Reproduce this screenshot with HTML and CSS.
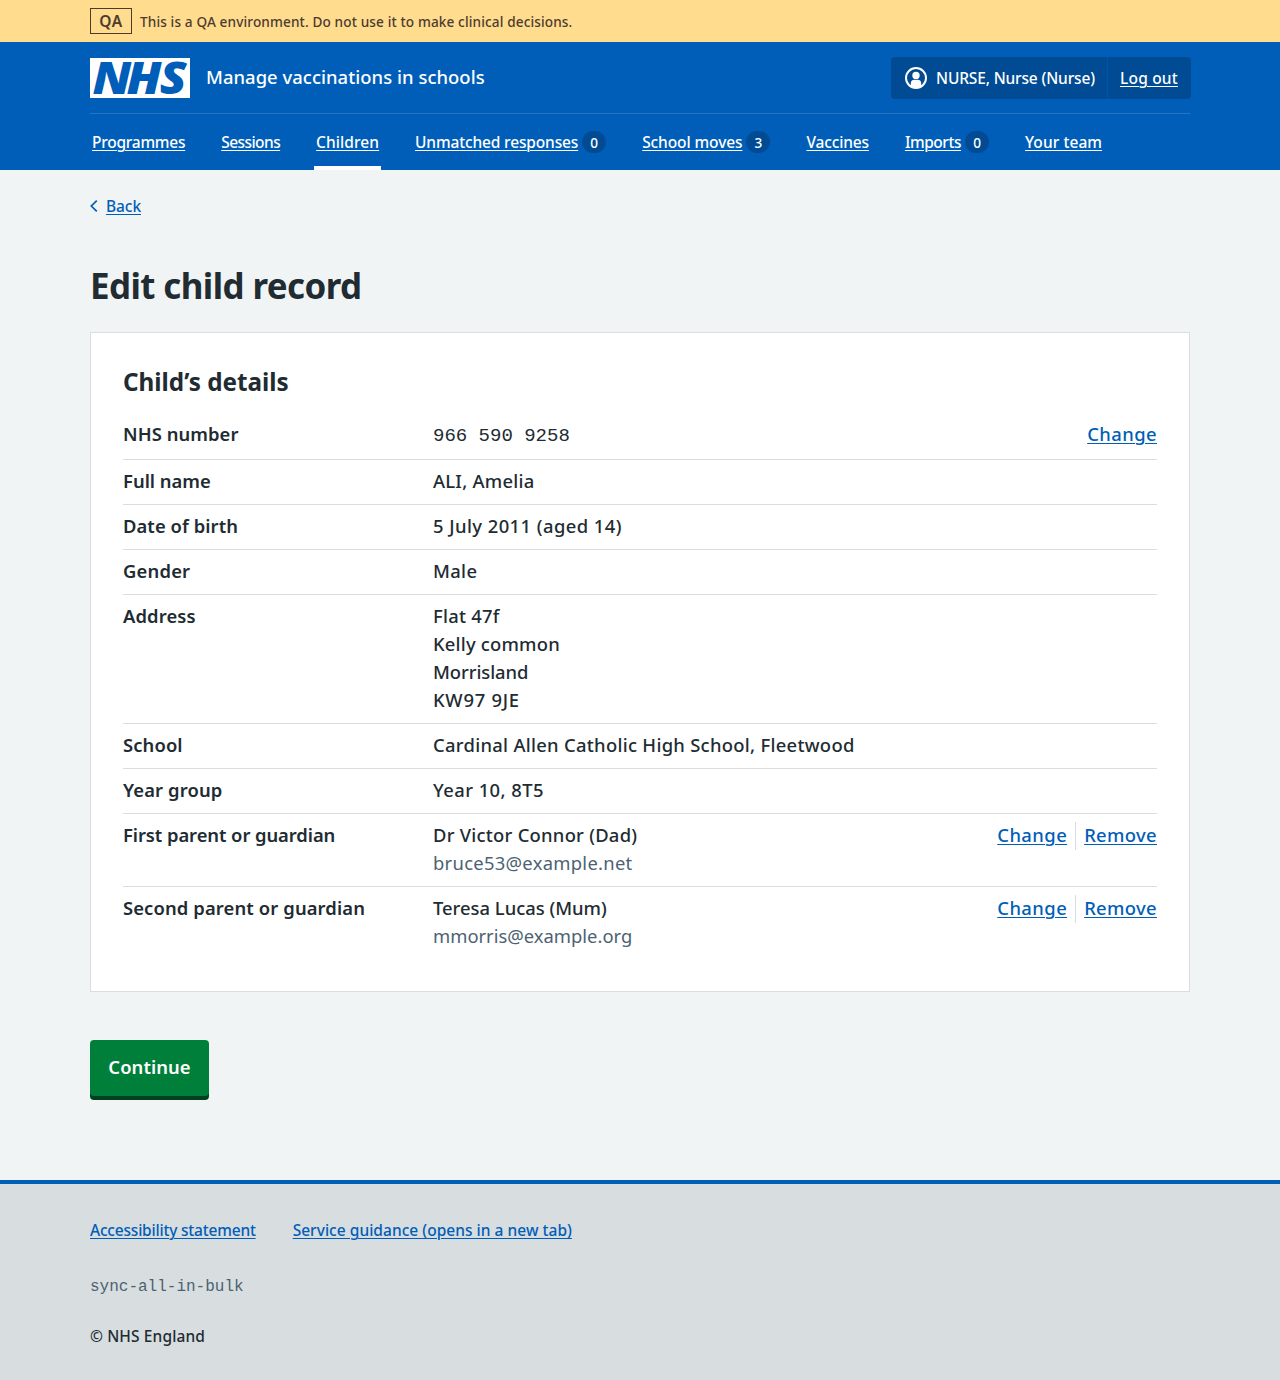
FILE: index.html
```html
<!DOCTYPE html>
<html lang="en">
<head>
<meta charset="utf-8">
<title>Edit child record - Manage vaccinations in schools</title>
<link rel="stylesheet" href="styles.css">
</head>
<body>
<div class="banner">
  <div class="container banner-row">
    <strong class="banner-tag">QA</strong>
    <span class="banner-text">This is a QA environment. Do not use it to make clinical decisions.</span>
  </div>
</div>
<header class="header">
  <div class="container">
    <div class="header-row">
      <div class="brand">
        <svg class="logo" viewBox="0 0 100 40" width="100" height="40" role="img" aria-label="NHS">
          <rect width="100" height="40" fill="#fff"/>
          <text class="logo-text" x="2.2 33.6 64" y="36" transform="scale(1.09 1)">NHS</text>
        </svg>
        <span class="service-name">Manage vaccinations in schools</span>
      </div>
      <div class="account">
        <span class="account-user">
          <svg width="22" height="22" viewBox="0 0 22 22" aria-hidden="true">
            <circle cx="11" cy="11" r="10" fill="none" stroke="#fff" stroke-width="2"/>
            <circle cx="11" cy="8.4" r="3.7" fill="#fff"/>
            <path d="M5.8 19V16.4a3.6 3.6 0 0 1 3.6-3.6h3.2a3.6 3.6 0 0 1 3.6 3.6V19a10 10 0 0 1-10.4 0Z" fill="#fff"/>
          </svg>
          <span class="track-n15">NURSE, Nurse (Nurse)</span>
        </span>
        <a class="account-link track-20" href="#">Log out</a>
      </div>
    </div>
    <nav class="nav">
      <span class="nav-item"><a class="track-n25" href="#">Programmes</a></span>
      <span class="nav-item"><a class="track-n56" href="#">Sessions</a></span>
      <span class="nav-item nav-item-current"><a class="track-07" href="#">Children</a></span>
      <span class="nav-item"><a class="track-n15" href="#">Unmatched responses</a><span class="count">0</span></span>
      <span class="nav-item"><a class="track-n10" href="#">School moves</a><span class="count">3</span></span>
      <span class="nav-item"><a class="track-n15" href="#">Vaccines</a></span>
      <span class="nav-item"><a class="track-n45" href="#">Imports</a><span class="count">0</span></span>
      <span class="nav-item"><a class="track-07" href="#">Your team</a></span>
    </nav>
  </div>
</header>
<main class="container main">
  <div class="back">
    <svg width="8" height="12" viewBox="0 0 8 12" aria-hidden="true"><path d="M6.8 .7 1.3 6l5.5 5.3" fill="none" stroke="#005eb8" stroke-width="1.7"/></svg>
    <a class="track-n07" href="#">Back</a>
  </div>
  <h1>Edit child record</h1>
  <section class="card">
    <h2>Child’s details</h2>
    <dl class="summary">
      <div class="row"><dt class="track-07">NHS number</dt><dd><span class="mono">966 590 9258</span></dd><dd class="actions"><a class="track-44" href="#">Change</a></dd></div>
      <div class="row"><dt>Full name</dt><dd class="track-25">ALI, Amelia</dd></div>
      <div class="row"><dt class="track-07">Date of birth</dt><dd class="track-44">5 July 2011 (aged 14)</dd></div>
      <div class="row"><dt class="track-20">Gender</dt><dd class="track-36">Male</dd></div>
      <div class="row"><dt class="track-12">Address</dt><dd><span class="track-25">Flat 47f</span><br><span class="track-20">Kelly common</span><br><span class="track-n07">Morrisland</span><br><span class="track-75">KW97 9JE</span></dd></div>
      <div class="row"><dt class="track-12">School</dt><dd class="track-29">Cardinal Allen Catholic High School, Fleetwood</dd></div>
      <div class="row"><dt class="track-12">Year group</dt><dd class="track-44">Year 10, 8T5</dd></div>
      <div class="row"><dt class="track-n07">First parent or guardian</dt><dd><span class="track-25">Dr Victor Connor (Dad)</span><br><span class="secondary track-29">bruce53@example.net</span></dd><dd class="actions"><a class="track-44" href="#">Change</a><a class="action-next track-36" href="#">Remove</a></dd></div>
      <div class="row"><dt class="track-12">Second parent or guardian</dt><dd>Teresa Lucas (Mum)<br><span class="secondary">mmorris@example.org</span></dd><dd class="actions"><a class="track-44" href="#">Change</a><a class="action-next track-36" href="#">Remove</a></dd></div>
    </dl>
  </section>
  <button class="button" type="button">Continue</button>
</main>
<footer class="footer">
  <div class="container">
    <div class="footer-links">
      <a class="track-n20" href="#">Accessibility statement</a>
      <a class="track-03" href="#">Service guidance (opens in a new tab)</a>
    </div>
    <div class="footer-branch">sync-all-in-bulk</div>
    <div class="footer-copy track-12">© NHS England</div>
  </div>
</footer>
</body>
</html>
```
FILE: styles.css
```css
* { box-sizing: border-box; }
body {
  margin: 0;
  background: #f0f4f5;
  color: #212b32;
  font: 500 18.4px/28px "Noto Sans", "Open Sans", sans-serif;
}
a { color: #005eb8; text-decoration: underline; text-decoration-thickness: 1px; text-underline-offset: 2px; }
.container { width: 1100px; margin: 0 auto; }

.banner { background: #ffdc8e; color: #4d3b30; }
.banner-row { display: flex; align-items: center; gap: 8px; height: 42px; }
.banner-tag {
  width: 42px; height: 26px; border: 1px solid #4d3b30;
  font-size: 15.5px; font-weight: 600; line-height: 25px; text-align: center; letter-spacing: .6px;
}
.banner-text { font-size: 13.6px; letter-spacing: .13px; padding-top: 1px; }

.header { background: #005eb8; color: #fff; font-size: 15.5px; }
.header a { color: #fff; }
.header-row { display: flex; justify-content: space-between; align-items: center; height: 72px; border-bottom: 1px solid #2675c3; }
.brand { display: flex; align-items: center; gap: 16px; }
.logo { display: block; overflow: visible; }
.logo-text { font: italic 800 45px "Open Sans", sans-serif; fill: #005eb8; }
.service-name { padding-bottom: 2px; font-size: 18.4px; letter-spacing: .05px; }
.account { display: flex; height: 42px; margin-right: -1px; background: #004b93; border-radius: 4px; line-height: 42px; }
.account-user { display: flex; align-items: center; gap: 9px; width: 217px; padding-left: 14px; border-right: 1px solid #0055a6; white-space: nowrap; }
.account-link { width: 83px; padding-left: 12px; }

.nav { display: flex; gap: 32px; height: 56px; }
.nav-item { display: flex; align-items: center; gap: 4px; padding: 4px 2px 0; border-bottom: 4px solid transparent; white-space: nowrap; }
.nav-item-current { border-bottom-color: #fff; }
.count { width: 24px; height: 22px; border-radius: 11px; background: #004b93; font-size: 13.6px; line-height: 23px; text-align: center; }

.main { height: 1010px; padding-top: 22px; }
.back { display: flex; align-items: center; gap: 8px; font-size: 15.5px; }
h1 { margin: 42px 0 22px; font-size: 34.9px; font-weight: 700; line-height: 48px; letter-spacing: -.58px; }
.card { height: 660px; padding: 32px 32px 0; background: #fff; border: 1px solid #d8dde0; }
h2 { margin: 0 0 21px; font-size: 24.25px; font-weight: 700; line-height: 34px; letter-spacing: 0; }
.summary { margin: 0; }
.row { display: flex; padding: 7px 0 9px; border-bottom: 1px solid #d8dde0; }
.row:first-child { padding-top: 0; height: 40px; }
.row:last-child { border-bottom: 0; }
dt { width: 310px; font-weight: 600; }
dd { margin: 0; }
.mono { font: 19px/28px "Liberation Mono", monospace; }
.secondary { color: #4c6272; font-weight: 400; }
.actions { display: flex; align-items: flex-start; margin-left: auto; }
.action-next { height: 28px; margin: 1px 0 0 8px; padding-left: 8px; border-left: 1px solid #d8dde0; line-height: 26px; }

.button {
  display: block; width: 119px; height: 56px; margin-top: 48px; padding: 0 0 2px; border: 0; border-radius: 4px;
  background: #007f3b; box-shadow: 0 4px 0 #00401e; color: #fff;
  font: 600 18.4px/54px "Noto Sans", sans-serif; letter-spacing: .07px;
}

.footer { height: 200px; padding-top: 32px; border-top: 4px solid #005eb8; background: #d8dde0; font-size: 15.5px; }
.footer-links { display: flex; gap: 37px; }
.footer-branch { margin-top: 29px; color: #4c6272; font: 16px/28px "Liberation Mono", monospace; }
.footer-copy { margin-top: 21px; }

.track-n56 { letter-spacing: -.56px; }
.track-n45 { letter-spacing: -.45px; }
.track-n25 { letter-spacing: -.25px; }
.track-n20 { letter-spacing: -.2px; }
.track-n15 { letter-spacing: -.15px; }
.track-n10 { letter-spacing: -.1px; }
.track-n07 { letter-spacing: -.07px; }
.track-03 { letter-spacing: .03px; }
.track-07 { letter-spacing: .07px; }
.track-12 { letter-spacing: .12px; }
.track-20 { letter-spacing: .2px; }
.track-25 { letter-spacing: .25px; }
.track-29 { letter-spacing: .29px; }
.track-36 { letter-spacing: .36px; }
.track-44 { letter-spacing: .44px; }
.track-75 { letter-spacing: .75px; }
```
